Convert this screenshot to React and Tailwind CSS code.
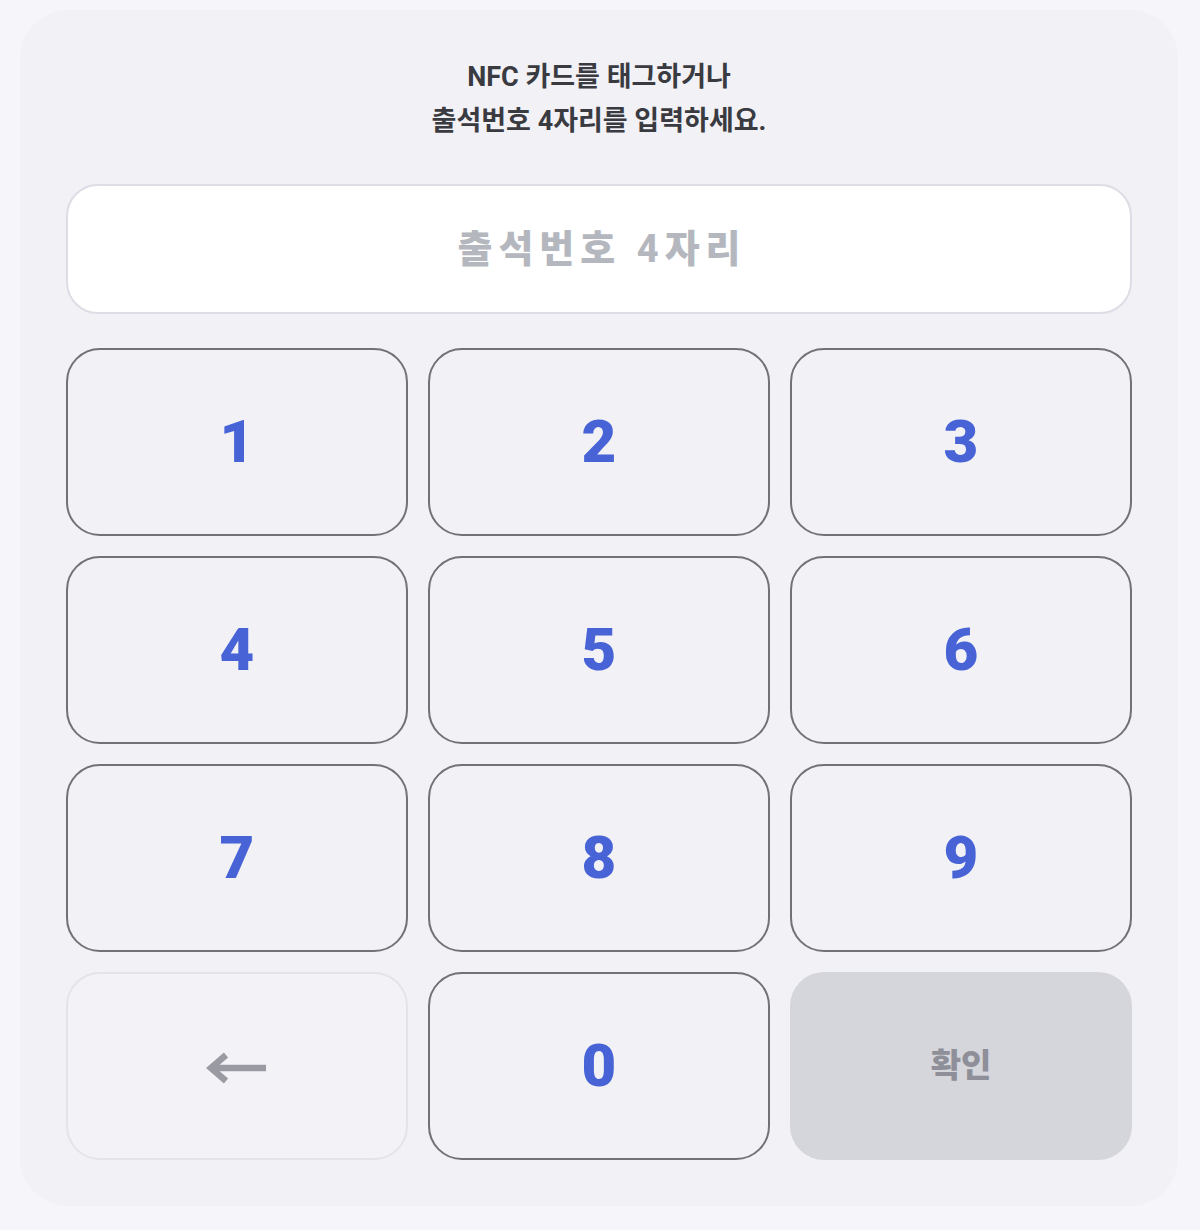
import React from "react";

const font = { fontFamily: 'Roboto, "Noto Sans CJK KR", sans-serif' };

function Key({ children }) {
  return (
    <button className="h-[188px] rounded-[34px] border-2 border-[#727178] bg-[#f1f1f6] flex items-center justify-center text-[60px] font-black text-[#4763d6] leading-none">
      {children}
    </button>
  );
}

export default function App() {
  return (
    <div className="min-h-[1230px] bg-[#f6f6fa] pt-[10px] px-[20px]" style={font}>
      <div className="w-[1158px] h-[1196px] rounded-[48px] bg-[#f1f1f6] px-[46px] pt-[45px] flex flex-col">
        <div className="text-center text-[27px] font-bold leading-[44px] text-[#3a3a41]">
          <div>NFC 카드를 태그하거나</div>
          <div>출석번호 4자리를 입력하세요.</div>
        </div>
        <div className="mt-[41px] h-[130px] rounded-[32px] border-2 border-[#dcdde5] bg-white flex items-center justify-center">
          <span className="text-[38px] font-extrabold tracking-[6px] text-[#b5b7be] pl-[6px]">출석번호 4자리</span>
        </div>
        <div className="mt-[34px] grid grid-cols-3 gap-[20px]">
          {["1", "2", "3", "4", "5", "6", "7", "8", "9"].map((d) => (
            <Key key={d}>{d}</Key>
          ))}
          <button className="h-[188px] rounded-[34px] border-2 border-[#e3e3e9] bg-[#f3f3f7] flex items-center justify-center">
            <svg width="62" height="32" viewBox="0 0 62 32" className="mt-[4px]">
              <path d="M4 16 H60" stroke="#9a9ba2" strokeWidth="6.5" fill="none" />
              <path d="M20 3 L5 16 L20 29" stroke="#9a9ba2" strokeWidth="6.5" fill="none" strokeLinejoin="miter" />
            </svg>
          </button>
          <Key>0</Key>
          <button className="h-[188px] rounded-[34px] bg-[#d5d6db] flex items-center justify-center text-[33px] font-black text-[#8e8f98]">
            확인
          </button>
        </div>
      </div>
    </div>
  );
}
